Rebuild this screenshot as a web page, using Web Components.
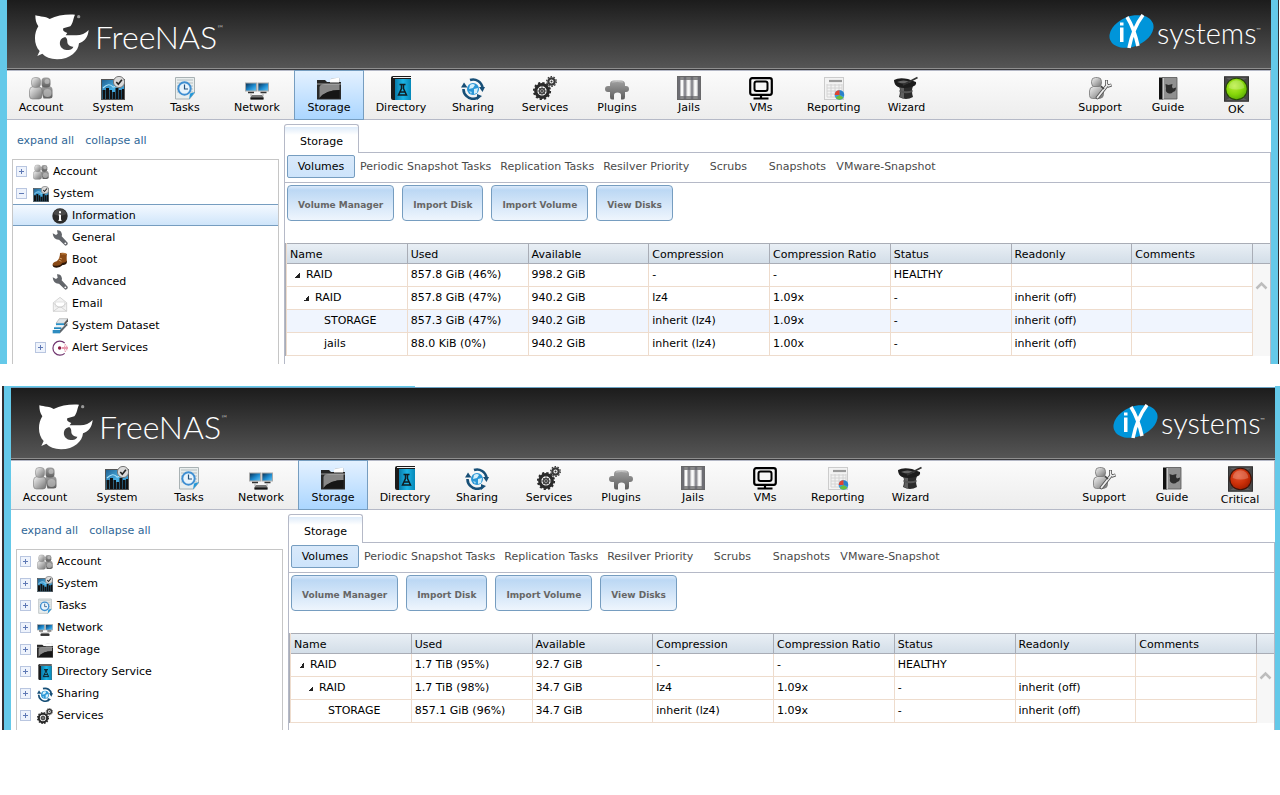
<!DOCTYPE html>
<html lang="en">
<head>
<meta charset="utf-8">
<title>FreeNAS - Storage</title>
<style>
  body {
    margin: 0;
    background: #fff;
    color: #000;
    font-family: "DejaVu Sans", Verdana, sans-serif;
    font-size: 11px;
    line-height: 14px;
  }
  .second {
    margin-top: 22px;
    margin-left: 2px;
    --edge-left: 2px solid #2f2f33;
    --edge-right: 0;
    --frame-right: 5px;
    --tree-foot: 4px;
    --banner-height: 72px;
  }
</style>
</head>
<body>

<nas-window>
  <nas-banner slot="top"></nas-banner>
  <nas-toolbar slot="top" status="OK" lamp="ok"></nas-toolbar>
  <nas-tree slot="side">
    <nas-tree-item icon="account" toggle="+">Account</nas-tree-item>
    <nas-tree-item icon="system" toggle="-">System</nas-tree-item>
    <nas-tree-item icon="info" child selected>Information</nas-tree-item>
    <nas-tree-item icon="wrench" child>General</nas-tree-item>
    <nas-tree-item icon="boot" child>Boot</nas-tree-item>
    <nas-tree-item icon="wrench" child>Advanced</nas-tree-item>
    <nas-tree-item icon="email" child>Email</nas-tree-item>
    <nas-tree-item icon="dataset" child>System Dataset</nas-tree-item>
    <nas-tree-item icon="alert" child toggle="+">Alert Services</nas-tree-item>
  </nas-tree>
  <nas-pane heading="Storage">
    <nas-grid>
      <nas-record depth="0" cells="RAID|857.8 GiB (46%)|998.2 GiB|-|-|HEALTHY||"></nas-record>
      <nas-record depth="1" cells="RAID|857.8 GiB (47%)|940.2 GiB|lz4|1.09x|-|inherit (off)|"></nas-record>
      <nas-record depth="2" active cells="STORAGE|857.3 GiB (47%)|940.2 GiB|inherit (lz4)|1.09x|-|inherit (off)|"></nas-record>
      <nas-record depth="2" cells="jails|88.0 KiB (0%)|940.2 GiB|inherit (lz4)|1.00x|-|inherit (off)|"></nas-record>
    </nas-grid>
  </nas-pane>
</nas-window>

<nas-window class="second" strip>
  <nas-banner slot="top"></nas-banner>
  <nas-toolbar slot="top" status="Critical" lamp="critical"></nas-toolbar>
  <nas-tree slot="side">
    <nas-tree-item icon="account" toggle="+">Account</nas-tree-item>
    <nas-tree-item icon="system" toggle="+">System</nas-tree-item>
    <nas-tree-item icon="tasks" toggle="+">Tasks</nas-tree-item>
    <nas-tree-item icon="network" toggle="+">Network</nas-tree-item>
    <nas-tree-item icon="storage" toggle="+">Storage</nas-tree-item>
    <nas-tree-item icon="directory" toggle="+">Directory Service</nas-tree-item>
    <nas-tree-item icon="sharing" toggle="+">Sharing</nas-tree-item>
    <nas-tree-item icon="services" toggle="+">Services</nas-tree-item>
  </nas-tree>
  <nas-pane heading="Storage">
    <nas-grid>
      <nas-record depth="0" cells="RAID|1.7 TiB (95%)|92.7 GiB|-|-|HEALTHY||"></nas-record>
      <nas-record depth="1" cells="RAID|1.7 TiB (98%)|34.7 GiB|lz4|1.09x|-|inherit (off)|"></nas-record>
      <nas-record depth="2" cells="STORAGE|857.1 GiB (96%)|34.7 GiB|inherit (lz4)|1.09x|-|inherit (off)|"></nas-record>
    </nas-grid>
  </nas-pane>
</nas-window>

<script>
// gradients shared by the icons; ids are scoped to each icon's shadow root
const DEFS = `
<defs>
  <linearGradient id="silver" x1="0" y1="0" x2="1" y2="1">
    <stop offset="0" stop-color="#f4f4f4"/><stop offset=".5" stop-color="#b4b4b4"/><stop offset="1" stop-color="#6f6f6f"/>
  </linearGradient>
  <linearGradient id="dark" x1="0" y1="0" x2="0" y2="1">
    <stop offset="0" stop-color="#a2a2a2"/><stop offset="1" stop-color="#5d5d5d"/>
  </linearGradient>
  <linearGradient id="blue" x1="0" y1="0" x2="1" y2="1">
    <stop offset="0" stop-color="#1e5c8c"/><stop offset=".5" stop-color="#49b1e6"/><stop offset="1" stop-color="#1b6ea8"/>
  </linearGradient>
  <linearGradient id="cover" x1="0" y1="0" x2="1" y2="0">
    <stop offset="0" stop-color="#087ba9"/><stop offset=".5" stop-color="#1db5e6"/><stop offset="1" stop-color="#0688b8"/>
  </linearGradient>
  <linearGradient id="screen" x1="0" y1="0" x2="1" y2="1">
    <stop offset="0" stop-color="#0b2c4c"/><stop offset=".55" stop-color="#1d8bd0"/><stop offset="1" stop-color="#6cc7f3"/>
  </linearGradient>
  <radialGradient id="green" cx=".4" cy=".35" r=".7">
    <stop offset="0" stop-color="#b9ee36"/><stop offset=".6" stop-color="#86d60a"/><stop offset="1" stop-color="#5cae05"/>
  </radialGradient>
  <radialGradient id="red" cx=".4" cy=".35" r=".7">
    <stop offset="0" stop-color="#e5502a"/><stop offset=".6" stop-color="#cb2f08"/><stop offset="1" stop-color="#a01d00"/>
  </radialGradient>
</defs>`;

const lamp = (fill, rim) => `
  <rect width="24" height="24" fill="#474747"/>
  <path d="M0 0h24L12 8zM0 24h24L12 16z" fill="#5f5f5f"/>
  <rect x=".5" y=".5" width="23" height="23" fill="none" stroke="#333"/>
  <circle cx="12" cy="12" r="10.8" fill="${rim}"/>
  <circle cx="12" cy="12" r="9.8" fill="url(#${fill})"/>
  <path d="M4.500 11a7.500 7.500 0 0 1 15 0q-7.500 3-15 0z" fill="#fff" opacity=".22"/>`;

const ICONS = {
  account: `
    <path d="M12 13.500q0-3 3-3.500h5q3.500.5 3.500 4v6q0 2.500-3 2.500h-6z" fill="url(#dark)"/>
    <rect x="12.500" y="1.500" width="9" height="10" rx="3.500" fill="url(#dark)"/>
    <path d="M.5 14.500q0-3.500 3.500-4h5q4 .5 4 4v5q0 3.500-3 3.500H3.500q-3 0-3-3z" fill="url(#silver)" stroke="#777" stroke-width=".6"/>
    <rect x="2.500" y="1.500" width="9" height="10" rx="3.500" fill="url(#silver)" stroke="#888" stroke-width=".6"/>
    <circle cx="18.500" cy="17" r="4" fill="#c9c9c9" opacity=".6"/>
    <circle cx="18" cy="5.500" r="2.500" fill="#d0d0d0" opacity=".6"/>`,
  system: `
    <rect x=".5" y="3.500" width="23" height="20" fill="url(#blue)" stroke="#555"/>
    <path d="M1.500 23V14h3v9zM5 23V12h3v11zM8.500 23V14h2.500v9zM11.500 23v-7h2.500v7zM14.500 23V12h3v11zM18 23V14h2.500v9zM21 23V13h2v10z" fill="#111"/>
    <path d="M2 12q6-6 10-1l4-1" fill="none" stroke="#a9e0f8" stroke-width="1.200"/>
    <circle cx="18" cy="6" r="5.600" fill="#dadada" stroke="#777"/>
    <path d="M15.300 6l2 2.200 3.600-4.500" fill="none" stroke="#222" stroke-width="1.600"/>`,
  tasks: `
    <path d="M2.500 1.500h19V17l-5 6h-14z" fill="#e9eeee" stroke="#a9b2b4"/>
    <path d="M4 4h16M4 7h16M4 10h16M4 13h16M4 16h16" stroke="#b5bfc1"/>
    <path d="M22 16l-6 7.500 1-6z" fill="#2397d8"/>
    <circle cx="11.500" cy="12.500" r="6.200" fill="#e8f4fc" stroke="#3f8fd2" stroke-width="2"/>
    <path d="M11.500 8.500v4.500h3.500" fill="none" stroke="#26527c" stroke-width="1.200"/>`,
  network: `
    <rect x=".5" y="7" width="11" height="8" fill="url(#screen)" stroke="#aaa"/>
    <rect x="13" y="7" width="10.500" height="8" fill="url(#screen)" stroke="#aaa"/>
    <path d="M3 16.500h6M15.500 16.500h6" stroke="#333" stroke-width="1.500"/>
    <path d="M6 17.500v3h2M18 17.500v3h-2" stroke="#aaa" fill="none"/>
    <path d="M7 19h10l1.500 2.500v2H5.500v-2z" fill="#777"/>
    <path d="M5.500 21.500h13v2h-13z" fill="#151515"/>`,
  storage: `
    <path d="M14 3l8-1 1 6H14z" fill="#fafafa" stroke="#b8b8b8" stroke-width=".7"/>
    <path d="M0 4h8l2 2h14v5H0z" fill="#262626"/>
    <path d="M13 3.500l9-2v5h-9z" fill="#fff"/>
    <path d="M0 8h24v15.500H0z" fill="#2a2a2a"/>
    <path d="M2.500 11Q3 8 8 8h14.500v6Q9 14 2.500 22z" fill="#888"/>
    <path d="M2.500 22Q9 14 22.500 14v8.500h-20z" fill="#161616"/>
    <path d="M0 8h24" stroke="#bbb" stroke-width=".8"/>`,
  directory: `
    <path d="M2 2q0-2 2-2h18v24H4q-2 0-2-2z" fill="#1b1b1b"/>
    <path d="M6 3h16v21H6z" fill="url(#cover)"/>
    <path d="M4 1.500h18" stroke="#f4f4f4"/>
    <path d="M10.500 8.500h6M12.500 8.500v4L9.500 19h8l-3-6.500v-4M11 16h5" fill="none" stroke="#101c22" stroke-width="1.500"/>`,
  sharing: `
    <circle cx="12" cy="13" r="6" fill="#2a96d6"/>
    <path d="M9 9q3-2 5 0l-2 3-4 1zM13 13l4-1-1 5-3 1z" fill="#d4f0fb"/>
    <path d="M8 15l3 1-1 2z" fill="#a4dbf4"/>
    <path d="M2.500 13A9.500 9.500 0 0 0 6 20.500M9 4A9.500 9.500 0 0 1 21.500 12M17 21.500A9.500 9.500 0 0 1 5 19.500" fill="none" stroke="#174f77" stroke-width="2.600"/>
    <path d="M0 11.500l3-5 3.500 5zM18 11h6l-2.500 5zM16 24v-6l5 2z" fill="#174f77"/>`,
  services: `
    <circle cx="9" cy="15" r="6.300" fill="none" stroke="#292929" stroke-width="3.200"/>
    <circle cx="9" cy="15" r="8.200" fill="none" stroke="#292929" stroke-width="1.800" stroke-dasharray="2.200 2.100"/>
    <circle cx="9" cy="15" r="2.600" fill="none" stroke="#444" stroke-width="1.500"/>
    <path d="M9 9v12M3 15h12M5 11l8 8M5 19l8-8" stroke="#444" stroke-width=".8"/>
    <circle cx="18.500" cy="5.500" r="3.200" fill="none" stroke="#393939" stroke-width="2.200"/>
    <circle cx="18.500" cy="5.500" r="4.800" fill="none" stroke="#393939" stroke-width="1.300" stroke-dasharray="1.600 1.400"/>
    <circle cx="18.500" cy="5.500" r="1" fill="#333"/>`,
  plugins: `
    <path d="M5 8q0-3.500 4-3.500h7q4 0 4 3.500v2h1q3 0 3 3t-3 3h-1v5q0 2.500-2 2.500h-2V19q0-2.500-3.500-2.500T9 19v4.500H7q-2 0-2-2.500v-5H3q-3 0-3-3t3-3h2z" fill="url(#dark)"/>
    <path d="M7 6q5-1 11 0" stroke="#c4c4c4" fill="none"/>`,
  jails: `
    <rect x=".5" y=".5" width="23" height="23" fill="#e2e2e2" stroke="#686868"/>
    <path d="M1 2.500h22M1 21.500h22" stroke="#8a8a8a" stroke-width="3"/>
    <path d="M2 1v22M8 1v22M15 1v22M22 1v22" stroke="#6d6d73" stroke-width="2.600"/>
    <path d="M5 4v16M11.500 4v16M18.500 4v16" stroke="#fafafa" stroke-width="2"/>
    <path d="M8 4v16M15 4v16" stroke="#aeaeb4"/>`,
  vms: `
    <rect x="1.200" y="2.200" width="21.600" height="16.600" rx="2" fill="none" stroke="#000" stroke-width="2.200"/>
    <rect x="5.500" y="5.500" width="13" height="9.500" rx="2" fill="#f7f7f7" stroke="#000" stroke-width="2"/>
    <path d="M12 18v4M4.500 22.500h15" stroke="#000" stroke-width="2.200"/>`,
  reporting: `
    <rect x="2.500" y="1.500" width="19" height="22" fill="#f3f3f3" stroke="#ccc"/>
    <path d="M7 5h13" stroke="#9a9a9a" stroke-width="2.200"/>
    <path d="M5 9h15M5 12h15M5 15h12M5 18h10M5 21h10M5 8v13M9 8v13M13 8v13M17 8v7M20 8v7" stroke="#d4d4d4"/>
    <circle cx="17.500" cy="19" r="4.800" fill="#3d9be0"/>
    <path d="M17.500 19v-4.800a4.800 4.800 0 0 1 4.500 5.800z" fill="#2b7fc9"/>
    <path d="M17.500 19h-4.800a4.800 4.800 0 0 1 4.800-4.800z" fill="#e0442f"/>
    <path d="M17.500 19l4 2.500a4.800 4.800 0 0 1-8 0z" fill="#6abf3a"/>`,
  wizard: `
    <path d="M5 10h14q-2 5 0 11-7 4-14 0 2-6 0-11z" fill="#2b2b2b"/>
    <path d="M5.500 10q2 6 .5 11l4 1.500V10z" fill="#777" opacity=".7"/>
    <path d="M0 4q5-3 14-1l8 3q1 4-5 5-7 2-13 0-4-2-4-7z" fill="#1c1c1c"/>
    <path d="M3 6q6-3 14 0-6 3-14 0z" fill="#666"/>
    <path d="M9 9L23.500 1.500" stroke="#333" stroke-width="1.800"/>
    <path d="M5.500 14q7 2.500 13 0v2q-6 2.500-13 0z" fill="#555"/>`,
  support: `
    <rect x="3.500" y="1.500" width="10" height="9.500" rx="4" fill="url(#silver)" stroke="#777" stroke-width=".8"/>
    <path d="M1.500 15q0-4 4-4.500h6q4 .5 4 4v4q0 3.500-4 4h-7q-3 0-3-3z" fill="url(#silver)" stroke="#777" stroke-width=".8"/>
    <path d="M9.500 21.500L19 9.500" stroke="#555" stroke-width="3.600" stroke-linecap="round"/>
    <path d="M18.500 4v4.500l2 1.500 3-1" stroke="#555" stroke-width="3" fill="none"/>
    <path d="M9.500 21.500L19 9.500" stroke="#eee" stroke-width="1.800" stroke-linecap="round"/>
    <path d="M18.500 4.500v4l2 1.500 2.500-1" stroke="#eee" stroke-width="1.400" fill="none"/>
    <path d="M13 10l3 3" stroke="#444" stroke-width="1.500"/>`,
  guide: `
    <path d="M3 1.500h4v22H3z" fill="#111"/>
    <path d="M6.500 1.500h14.500v21.500H6.500z" fill="#909090" stroke="#555" stroke-width=".8"/>
    <path d="M7.200 2v21" stroke="#f4f4f4" stroke-width=".8"/>
    <path d="M9.500 8l3 1 4-1-.5 3 1 1.500 3-1q0 4-3 4.500-1.500 2-4 1.500-4-1-3-5z" fill="#2d2d2d"/>`,
  ok: lamp('green', '#274a05'),
  critical: lamp('red', '#3e1207'),
  info: `
    <circle cx="12" cy="12" r="11.500" fill="#2b2b2b"/>
    <path d="M2 9a10.500 10.500 0 0 1 20 0q-10 5-20 0z" fill="#666" opacity=".5"/>
    <path d="M12 5v3M12 10v9" stroke="#fff" stroke-width="3"/>
    <path d="M10 10.500h2M9.500 18.500h5" stroke="#fff" stroke-width="1.400"/>`,
  wrench: `
    <path d="M1 5l5 2.500 2.500-2L7.500.5Q14 0 15 7l-.5 2.500 9 9.500q1 4-3.500 4.500L10.500 14.500Q2 15 1 5z" fill="#63666b"/>
    <circle cx="20" cy="20" r="1.400" fill="#fff"/>`,
  boot: `
    <path d="M12 1.500q6-1.500 10.500 1.500-1 5 0 12-2 4-6 3-4 5-10 4.500-6 0-5.500-4 .5-3 6-4.500 5-4 5-12.500z" fill="#8a4a16"/>
    <path d="M14 3q4-1 7 0" stroke="#c98a4a" stroke-width="1.600" fill="none"/>
    <path d="M11 9l4 1.500M10 12l4 2" stroke="#e0b078" stroke-width="1.200"/>
    <path d="M1 19q2 2.500 7 1.500 5 0 8-4.500 4 1 6-3v4q-2 3-6 2.500-4 4-9 4-6 0-6-4.500z" fill="#2a1609"/>`,
  email: `
    <path d="M2 10l10-8 10 8v13H2z" fill="#f3f3f3" stroke="#c4c4c4"/>
    <path d="M5 9h14v7H5z" fill="#fff" stroke="#d6d6d6"/>
    <path d="M2 10.500l8 6.500h4l8-6.500M2 23l8-6M22 23l-8-6" fill="none" stroke="#c4c4c4"/>`,
  dataset: `
    <path d="M11 1h13l-6 7H6z" fill="#dfe4e7" stroke="#888" stroke-width=".7"/>
    <path d="M18 8l6-7v4l-6 7z" fill="#555"/>
    <path d="M6 8h12v3H6z" fill="#2690c8"/>
    <path d="M4 13l3-2h11l-4 4H3z" fill="#eef2f4"/>
    <path d="M3 14h11v3H3z" fill="#1f86bd"/>
    <path d="M1 18h11v5H1z" fill="#2e8cc0"/>
    <path d="M1 18l3-1h11l-3 1z" fill="#fff"/>
    <path d="M12 18l11-11v4L12 23z" fill="#5c666d"/>`,
  alert: `
    <path d="M19 4.500A10.500 10.500 0 1 0 19 20" fill="none" stroke="#71366f" stroke-width="1.800"/>
    <circle cx="11.500" cy="12" r="2.600" fill="#8c1c44"/>
    <path d="M15.500 12h8" stroke="#d2335c" stroke-width="2" stroke-dasharray="2 1"/>
    <path d="M19 7h3M19 17h3M18 9.500h5M18 14.500h5" stroke="#e48da4" stroke-width="1.600" stroke-dasharray="2 1"/>`
};

class NasIcon extends HTMLElement {
  constructor() {
    super();
    this.attachShadow({ mode: 'open' });
  }

  connectedCallback() {
    this.shadowRoot.innerHTML = `
<style>
  :host { display: block; flex: none; width: 24px; height: 24px; }
  svg { display: block; width: 100%; height: 100%; }
</style>
<svg viewBox="0 0 24 24" aria-hidden="true">${DEFS}${ICONS[this.getAttribute('name')] || ''}</svg>`;
  }
}

class NasWindow extends HTMLElement {
  constructor() {
    super();
    this.attachShadow({ mode: 'open' }).innerHTML = `
<style>
  :host {
    display: block;
    border-left: var(--edge-left, 0);
    border-right: var(--edge-right, 1px solid #2f2f33);
    margin-right: 1px;
  }
  :host([strip]) { margin-right: 0; }
  .frame {
    border: solid #64c9e9;
    border-width: 0 var(--frame-right, 7px) 0 7px;
  }
  .strip { display: none; }
  :host([strip]) .strip {
    display: block;
    height: 1px;
    border-bottom: 1px solid #6ba3c4;
    background: linear-gradient(90deg, #64c9e9 32%, #fff 32%);
  }
  .body { display: flex; align-items: stretch; }
  .side { flex: none; width: 277px; }
  .main { flex: 1; min-width: 0; display: flex; }
  .main ::slotted(*) { flex: 1; min-width: 0; }
</style>
<div class="frame">
  <div class="strip"></div>
  <slot name="top"></slot>
  <div class="body">
    <aside class="side"><slot name="side"></slot></aside>
    <main class="main"><slot></slot></main>
  </div>
</div>`;
  }
}

class NasBanner extends HTMLElement {
  constructor() {
    super();
    this.attachShadow({ mode: 'open' }).innerHTML = `
<style>
  :host {
    display: flex;
    align-items: flex-end;
    justify-content: space-between;
    box-sizing: border-box;
    height: var(--banner-height, 70px);
    padding: 0 10px 9px 27px;
    background: linear-gradient(#1c1c1c, #565656);
    border-bottom: 1px solid #3a3a3d;
    box-shadow: inset 0 -1px #8e8e8e;
  }
  a { display: flex; align-items: flex-start; color: #fff; text-decoration: none; font-family: Lato, "Open Sans", sans-serif; font-weight: 300; }
  .shark { width: 56px; height: 46px; }
  .name { margin-left: 5px; font-size: 32px; line-height: 46px; }
  sup { font-size: 8px; line-height: 10px; margin-top: 9px; }
  .mark { width: 46px; height: 36px; }
  .systems { font-size: 29px; line-height: 38px; margin-left: 2px; }
  .ix { padding-bottom: 8px; }
  .ix sup { font-size: 6px; margin-top: 11px; }
</style>
<a href="#" aria-label="FreeNAS home">
  <svg class="shark" viewBox="103 38 168 138" aria-hidden="true">
    <path fill="#fff" fill-rule="evenodd" d="M107 42C122 46 140 46 150 53C172 42 200 38 226 40C220 52 221 64 212 75L191 81C188 88 194 92 203 95L198 102L230 102C244 102 258 96 267 86C265 108 254 120 238 126C236 150 212 174 172 174C152 173 137 167 128 157L113 164L120 149C103 132 101 98 116 75C109 66 107 54 107 42Z
      M198 108C186 108 179 118 181 130C184 142 196 147 206 146C214 145 220 141 221 136C212 137 203 130 203 122C203 116 202 112 198 108Z"/>
    <circle cx="237" cy="46" r="5" fill="#999"/>
  </svg>
  <span class="name">FreeNAS</span><sup>™</sup>
</a>
<a class="ix" href="#" aria-label="iXsystems">
  <svg class="mark" viewBox="0 0 46 36" aria-hidden="true">
    <ellipse cx="22.500" cy="17.500" rx="23" ry="15" transform="rotate(-22 22.500 17.500)" fill="#0095da"/>
    <path d="M11 13.500h3.500V28H11zM11 8.500h3.500v3H11z" fill="#fff"/>
    <path d="M18 3q7 11 11 29M34 1Q24 14 20 34" fill="none" stroke="#fff" stroke-width="3.500"/>
  </svg>
  <span class="systems">systems</span><sup>™</sup>
</a>`;
  }
}

class NasToolbar extends HTMLElement {
  constructor() {
    super();
    this.attachShadow({ mode: 'open' });
  }

  connectedCallback() {
    const left = ['Account', 'System', 'Tasks', 'Network', 'Storage', 'Directory', 'Sharing',
      'Services', 'Plugins', 'Jails', 'VMs', 'Reporting', 'Wizard'];
    const button = (label, icon = label.toLowerCase(), cls = '') => `
      <button type="button" class="${cls}"><nas-icon name="${icon}"></nas-icon><span>${label}</span></button>`;
    this.shadowRoot.innerHTML = `
<style>
  :host {
    display: flex;
    justify-content: space-between;
    box-sizing: border-box;
    height: 50px;
    border: solid #b5b9c7;
    border-width: 1px 1px 1px 0;
    background: linear-gradient(#fbfbfb, #ededed);
  }
  nav { display: flex; gap: 2px; margin: -1px; }
  .right { padding-right: 2px; }
  button {
    display: flex;
    flex-direction: column;
    align-items: center;
    gap: 1px;
    box-sizing: border-box;
    min-width: 70px;
    padding: 5px 8px 0;
    border: 1px solid transparent;
    background: none;
    font: inherit;
    color: inherit;
    white-space: nowrap;
  }
  .right button { min-width: 66px; }
  .on { border-color: #769dc0; background: linear-gradient(#e4f1ff, #abd6ff); }
  .lamp nas-icon { width: 25px; height: 26px; }
</style>
<nav>${left.map(l => button(l, undefined, l === 'Storage' ? 'on' : '')).join('')}</nav>
<nav class="right">
  ${button('Support')}${button('Guide')}${button(this.getAttribute('status'), this.getAttribute('lamp'), 'lamp')}
</nav>`;
  }
}

class NasTree extends HTMLElement {
  constructor() {
    super();
    this.attachShadow({ mode: 'open' }).innerHTML = `
<style>
  :host { display: flex; flex-direction: column; height: 100%; box-sizing: border-box; padding: 14px 5px 0; }
  .links { display: flex; gap: 11px; padding: 0 5px 11px; }
  a { color: #2f6797; text-decoration: none; }
  .tree { flex: 1; border: 1px solid #c6c6c6; border-bottom: 0; padding-bottom: var(--tree-foot, 6px); }
</style>
<div class="links"><a href="#">expand all</a><a href="#">collapse all</a></div>
<div class="tree" role="tree"><slot></slot></div>`;
  }
}

class NasTreeItem extends HTMLElement {
  constructor() {
    super();
    this.attachShadow({ mode: 'open' });
  }

  connectedCallback() {
    const toggle = this.getAttribute('toggle');
    this.setAttribute('role', 'treeitem');
    this.shadowRoot.innerHTML = `
<style>
  :host {
    display: flex;
    align-items: center;
    box-sizing: border-box;
    height: 22px;
    padding-left: 3px;
    border: solid transparent;
    border-width: 1px 0;
  }
  :host([child]) { padding-left: 22px; }
  :host([selected]) { border-color: #769dc0; background: linear-gradient(#f4f9ff, #cfe5fa); }
  .toggle, .blank { flex: none; width: 11px; height: 11px; margin-right: 6px; }
  .toggle {
    padding: 0;
    border: 1px solid #b9c6e0;
    background:
      linear-gradient(#5f79b5, #5f79b5) center / 5px 1px no-repeat,
      #eef3fc;
  }
  .plus {
    background:
      linear-gradient(#5f79b5, #5f79b5) center / 5px 1px no-repeat,
      linear-gradient(#5f79b5, #5f79b5) center / 1px 5px no-repeat,
      #eef3fc;
  }
  nas-icon { width: 16px; height: 16px; margin: 2px 4px 0 0; }
  .label { padding-top: 2px; }
</style>
${toggle ? `<button type="button" class="toggle ${toggle === '+' ? 'plus' : ''}" aria-label="toggle"></button>` : '<span class="blank"></span>'}
<nas-icon name="${this.getAttribute('icon')}"></nas-icon>
<span class="label"><slot></slot></span>`;
  }
}

class NasPane extends HTMLElement {
  constructor() {
    super();
    this.attachShadow({ mode: 'open' });
  }

  connectedCallback() {
    const tabs = ['Volumes', 'Periodic Snapshot Tasks', 'Replication Tasks', 'Resilver Priority',
      'Scrubs', 'Snapshots', 'VMware-Snapshot'];
    const actions = ['Volume Manager', 'Import Disk', 'Import Volume', 'View Disks'];
    this.shadowRoot.innerHTML = `
<style>
  :host { display: flex; flex-direction: column; padding-top: 4px; }
  button { font: inherit; white-space: nowrap; box-sizing: border-box; }
  .tab {
    align-self: flex-start;
    height: 29px;
    margin-bottom: -1px;
    padding: 6px 15px 0;
    border: 1px solid #b5b9c7;
    border-bottom: 0;
    border-radius: 3px 3px 0 0;
    background: linear-gradient(#fff 2px, #dfecfa 2px, #fff 10px);
    color: #000;
    position: relative;
  }
  .content { flex: 1; border: solid #b5b9c7; border-width: 1px 1px 0 1px; }
  .tabs { display: flex; gap: 1px; padding: 2px 2px 4px; border-bottom: 1px solid #b5b9c7; }
  .tabs button {
    min-width: 68px;
    height: 23px;
    padding: 0 3px;
    border: 1px solid transparent;
    background: none;
    color: #4a4a4a;
  }
  .tabs .on { border-color: #769dc0; border-radius: 2px; background: linear-gradient(#d9e9fa, #cde4fb); color: #000; }
  .actions { display: flex; gap: 8px; padding: 2px 2px 22px; }
  .actions button {
    height: 36px;
    padding: 3px 10px 0;
    border: 1px solid #769dc0;
    border-radius: 4px;
    background: linear-gradient(#dceafa, #bcd8f4 4px, #eef5fd);
    color: #666;
    font-size: 9px;
    font-weight: bold;
  }
</style>
<button type="button" class="tab">${this.getAttribute('heading')}</button>
<div class="content">
  <div class="tabs">${tabs.map((t, i) => `<button type="button" class="${i ? '' : 'on'}">${t}</button>`).join('')}</div>
  <div class="actions">${actions.map(a => `<button type="button">${a}</button>`).join('')}</div>
  <slot></slot>
</div>`;
  }
}

class NasGrid extends HTMLElement {
  constructor() {
    super();
    this.attachShadow({ mode: 'open' });
  }

  connectedCallback() {
    const heads = ['Name', 'Used', 'Available', 'Compression', 'Compression Ratio', 'Status', 'Readonly', 'Comments'];
    const rows = [...this.querySelectorAll('nas-record')].map(rec => {
      const depth = Number(rec.getAttribute('depth'));
      const [name, ...rest] = rec.getAttribute('cells').split('|');
      return `
      <tr class="${rec.hasAttribute('active') ? 'active' : ''}">
        <td><span class="name d${depth}"><i class="${depth < 2 ? 'open' : ''}"></i>${name}</span></td>
        ${rest.map(c => `<td>${c}</td>`).join('')}
      </tr>`;
    }).join('');
    this.shadowRoot.innerHTML = `
<style>
  :host { display: flex; border-left: 1px solid #a9adb6; }
  table { flex: 1; width: 100%; table-layout: fixed; border-collapse: separate; border-spacing: 0; border-left: 1px solid #eedccd; }
  th, td { box-sizing: border-box; padding: 0 0 0 3px; text-align: left; font-weight: normal; white-space: nowrap; }
  th, .corner {
    height: 21px;
    border: solid #a9adb6;
    border-width: 1px 1px 1px 0;
    background: linear-gradient(#e9eff5, #d3dee8);
  }
  th { padding-top: 2px; }
  td { height: 23px; border: solid #eedccd; border-width: 0 1px 1px 0; }
  .active td { background: #f0f5fe; }
  .name { display: flex; align-items: center; }
  .d1 { padding-left: 9px; }
  .d2 { padding-left: 18px; }
  i { width: 16px; height: 14px; }
  i.open { background: linear-gradient(135deg, transparent 50%, #222 50%) 5px 5px / 5px 5px no-repeat; }
  .scroll { flex: none; width: 17px; background: #f7f7f7; }
  .corner { box-sizing: border-box; border-right: 0; }
  .scroll button { display: block; width: 17px; height: 42px; padding: 0 2px; border: 0; background: none; }
  svg { display: block; width: 13px; height: 9px; }
</style>
<table>
  <thead><tr>${heads.map(h => `<th scope="col">${h}</th>`).join('')}</tr></thead>
  <tbody>${rows}</tbody>
</table>
<div class="scroll">
  <div class="corner"></div>
  <button type="button" aria-label="scroll up">
    <svg viewBox="0 0 13 9"><path d="M1.500 7.500l5-5 5 5" fill="none" stroke="#bdbdbd" stroke-width="2.500"/></svg>
  </button>
</div>`;
  }
}

customElements.define('nas-icon', NasIcon);
customElements.define('nas-window', NasWindow);
customElements.define('nas-banner', NasBanner);
customElements.define('nas-toolbar', NasToolbar);
customElements.define('nas-tree', NasTree);
customElements.define('nas-tree-item', NasTreeItem);
customElements.define('nas-pane', NasPane);
customElements.define('nas-grid', NasGrid);
</script>
</body>
</html>
